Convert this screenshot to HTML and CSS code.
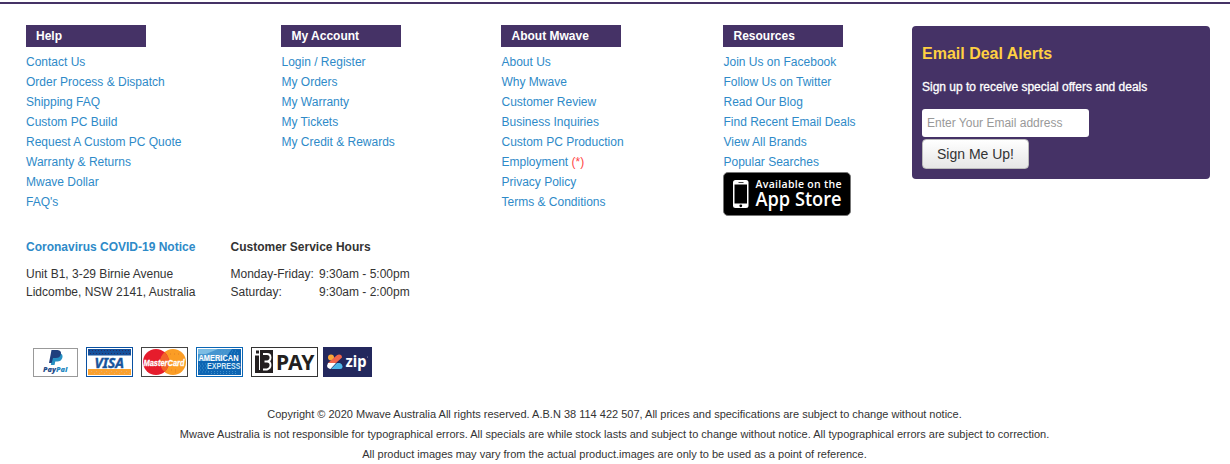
FILE: index.html
```html
<!DOCTYPE html>
<html lang="en">
<head>
<meta charset="utf-8">
<title>Mwave Australia</title>
<link rel="stylesheet" href="styles.css">
</head>
<body>
<footer class="footer">
  <div class="columns">
    <section class="col">
      <h4 class="col-title">Help</h4>
      <ul class="links">
        <li><a>Contact Us</a></li><li><a>Order Process &amp; Dispatch</a></li><li><a>Shipping FAQ</a></li><li><a>Custom PC Build</a></li><li><a>Request A Custom PC Quote</a></li><li><a>Warranty &amp; Returns</a></li><li><a>Mwave Dollar</a></li><li><a>FAQ's</a></li>
      </ul>
    </section>
    <section class="col shifted">
      <h4 class="col-title">My Account</h4>
      <ul class="links">
        <li><a>Login / Register</a></li><li><a>My Orders</a></li><li><a>My Warranty</a></li><li><a>My Tickets</a></li><li><a>My Credit &amp; Rewards</a></li>
      </ul>
    </section>
    <section class="col shifted">
      <h4 class="col-title">About Mwave</h4>
      <ul class="links">
        <li><a>About Us</a></li><li><a>Why Mwave</a></li><li><a>Customer Review</a></li><li><a>Business Inquiries</a></li><li><a>Custom PC Production</a></li><li><a>Employment <span class="flag">(*)</span></a></li><li><a>Privacy Policy</a></li><li><a>Terms &amp; Conditions</a></li>
      </ul>
    </section>
    <section class="col shifted">
      <h4 class="col-title">Resources</h4>
      <ul class="links">
        <li><a>Join Us on Facebook</a></li><li><a>Follow Us on Twitter</a></li><li><a>Read Our Blog</a></li><li><a>Find Recent Email Deals</a></li><li><a>View All Brands</a></li><li><a>Popular Searches</a></li>
      </ul>
      <svg class="appstore" width="128" height="44" viewBox="0 0 128 44">
        <rect x=".5" y=".5" width="127" height="43" rx="4.5" fill="#000" stroke="#777"/>
        <rect x="10" y="8" width="15.5" height="28" rx="2.5" fill="#fff"/>
        <rect x="11.5" y="12.5" width="12.5" height="19" fill="#000"/>
        <rect x="15.5" y="10" width="5" height="1" fill="#444"/>
        <circle cx="17.8" cy="33.8" r="1.4" fill="#000"/>
        <g fill="#fff" font-family="Open Sans, sans-serif">
          <text x="32.500" y="16" font-size="10.500" font-weight="600" textLength="86" lengthAdjust="spacing">Available on the</text>
          <text x="32.500" y="34" font-size="19.500" font-weight="600" textLength="86" lengthAdjust="spacingAndGlyphs">App Store</text>
        </g>
      </svg>
    </section>
    <section class="alerts">
      <h3 class="alerts-title">Email Deal Alerts</h3>
      <p class="alerts-text">Sign up to receive special offers and deals</p>
      <input class="email" type="text" placeholder="Enter Your Email address">
      <button class="signup">Sign Me Up!</button>
    </section>
  </div>
  <div class="contact">
    <div class="address">
      <h5 class="contact-title notice">Coronavirus COVID-19 Notice</h5>
      <p>Unit B1, 3-29 Birnie Avenue<br>Lidcombe, NSW 2141, Australia</p>
    </div>
    <div>
      <h5 class="contact-title">Customer Service Hours</h5>
      <div class="hours"><span>Monday-Friday:</span><span>9:30am - 5:00pm</span><span>Saturday:</span><span>9:30am - 2:00pm</span></div>
    </div>
  </div>
  <div class="payments">
    <svg class="paypal" width="45" height="29" viewBox="0 0 45 29">
      <rect x=".5" y=".5" width="44" height="28" fill="#fff" stroke="#999"/>
      <path d="M20 5h6.500q4 1 2.800 5-1.300 3.500-5 3.500h-2l-.8 3.500h-3.700z" fill="#2790c3"/>
      <path d="M18.500 2h6q4.500.8 3.300 4.500-1 3.500-5 3.500H20l-1.300 5H16z" fill="#1f3f7d"/>
      <g font-family="Open Sans, sans-serif" font-size="7.500" font-weight="800" font-style="italic"><text x="10" y="24" fill="#1f4a88" textLength="13" lengthAdjust="spacingAndGlyphs">Pay</text><text x="23" y="24" fill="#2387c2" textLength="11.500" lengthAdjust="spacingAndGlyphs">Pal</text></g>
    </svg>
    <svg class="visa" width="47" height="30" viewBox="0 0 47 30">
      <rect x=".5" y=".5" width="46" height="29" fill="#fff" stroke="#0a51a1"/>
      <path d="M2 2h43v6.500H2z" fill="#14509c"/><path d="M3 3.500h41M4 6.500h40" stroke="#252e63" stroke-dasharray="1 2"/>
      <path d="M2 22h43v6H2z" fill="#f9a12e"/><path d="M5 24.500h38M8 26.500h36" stroke="#e5ac77" stroke-dasharray="1 4"/>
      <text x="8.500" y="20.500" font-family="Noto Sans, sans-serif" font-size="14.500" font-weight="700" font-style="italic" fill="#17549c" stroke="#17549c" stroke-width=".4" textLength="29.500" lengthAdjust="spacingAndGlyphs">VISA</text>
    </svg>
    <svg class="mastercard" width="47" height="30" viewBox="0 0 47 30">
      <rect x=".5" y=".5" width="46" height="29" fill="#fff" stroke="#444"/>
      <circle cx="32" cy="15" r="13" fill="#fb9d25"/><circle cx="15" cy="15" r="13" fill="#e61c2c"/>
      <path d="M23.500 5.200a13 13 0 0 1 0 19.600 13 13 0 0 1 0-19.600z" fill="#f26329"/>
      <path d="M29 7h9M30 23h8M34 25h4" stroke="#e48225" stroke-dasharray="1 3"/>
      <text x="2.500" y="18.500" font-family="Liberation Sans, sans-serif" font-size="9" font-weight="700" font-style="italic" fill="#fff" stroke="#fff" stroke-width=".3" textLength="41" lengthAdjust="spacingAndGlyphs">MasterCard</text>
    </svg>
    <svg class="amex" width="47" height="30" viewBox="0 0 47 30">
      <rect x=".5" y=".5" width="46" height="29" fill="#fff" stroke="#0b66b4"/>
      <path d="M2 2h43v26H2z" fill="#0d65b3"/><path d="M2 2h34L27 14H2z" fill="#4796d0"/><path d="M2 2h20L10 7H2z" fill="#7cbce3"/>
      <path d="M3 17h8M4 19h7M3 21h7M4 23h7M3 25h11M24 4h18M26 6h17M12 24.500h30M15 26.500h25" stroke="#3f8fca" stroke-dasharray="1 2"/>
      <g font-family="Liberation Sans, sans-serif" font-size="8.500" font-weight="700" fill="#fff"><text x="2.500" y="13.500" textLength="40" lengthAdjust="spacingAndGlyphs">AMERICAN</text><text x="11" y="21.800" fill="#d3e8f6" textLength="33.500" lengthAdjust="spacingAndGlyphs">EXPRESS</text></g>
    </svg>
    <svg class="bpay" width="67" height="30" viewBox="0 0 67 30">
      <rect x=".5" y=".5" width="66" height="29" fill="#fff" stroke="#333"/>
      <path d="M9 3h13v23H9zM4 8.500h4V26H4zM5 3.500h3v3H5zM4 23h6v3H4z" fill="#231f20"/>
      <path d="M12 7h4q3.500 0 3.500 3.500T16 14.500q3.500 0 3.500 3.500T16 22.500h-4M13.500 14.500H16" fill="none" stroke="#fff" stroke-width="1.900"/>
      <text x="25" y="23" font-family="Noto Sans, sans-serif" font-size="21" font-weight="700" fill="#231f20" textLength="38.500" lengthAdjust="spacingAndGlyphs">PAY</text>
    </svg>
    <svg class="zip" width="49" height="30" viewBox="0 0 49 30">
      <path d="M0 0h49v30H0z" fill="#23285d"/>
      <circle cx="8" cy="10.500" r="3" fill="#f9a638"/>
      <path d="M5 16h8l6-5.500q0-3-3-3-2 0-3 1.500z" fill="#f0654b"/>
      <path d="M5 16h8l-5.500 6H7q-3-1-3-3z" fill="#fff"/>
      <path d="M8 22l6-6h3q2.500 1 2.500 3.500T17 22z" fill="#4db6e8"/>
      <text x="22.500" y="19.500" font-family="Noto Sans, sans-serif" font-size="15.500" font-weight="700" fill="#fff" textLength="21" lengthAdjust="spacingAndGlyphs">zip</text><circle cx="44.500" cy="10" r=".5" fill="#b9bbd0"/>
    </svg>
  </div>
  <div class="legal">
    <p>Copyright © 2020 Mwave Australia All rights reserved. A.B.N 38 114 422 507, All prices and specifications are subject to change without notice.</p>
    <p>Mwave Australia is not responsible for typographical errors. All specials are while stock lasts and subject to change without notice. All typographical errors are subject to correction.</p>
    <p>All product images may vary from the actual product.images are only to be used as a point of reference.</p>
  </div>
</footer>
</body>
</html>
```

FILE: styles.css
```css
* { box-sizing: border-box; }
body { margin: 0; background: #fff; font: 12px/18px "Liberation Sans", Arial, sans-serif; color: #333; overflow: hidden; }
h3, h4, h5, p, ul { margin: 0; padding: 0; }
.footer { margin-top: 2px; border-top: 2px solid #453266; padding: 21px 20px 0 26px; height: 462px; }
.columns { display: grid; grid-template-columns: 255px 220px 222px 189px 298px; height: 213px; align-items: start; }
.col-title { width: 120px; height: 22px; padding-left: 10px; background: #453266; color: #fff; font-size: 12px; line-height: 22px; }
.links { list-style: none; padding-top: 5px; line-height: 20px; color: #2e8ac8; white-space: nowrap; }
.shifted .links { padding-left: .5px; }
.shifted .col-title { padding-left: 10.5px; }
.flag { color: #ff4545; }
.appstore { display: block; }
.alerts { margin-top: 1px; height: 153px; padding: 18px 10px 0; border-radius: 4px; background: #453266; color: #fff; }
.alerts-title { color: #ffd042; font-size: 16px; line-height: 20px; }
.alerts-text { margin-top: 14px; -webkit-text-stroke: .3px #fff; }
.email { display: block; width: 167px; height: 28px; margin-top: 13px; padding: 0 5px; border: 0; border-radius: 3px; background: #fff; font: 12px "Liberation Sans", Arial, sans-serif; }
.email::placeholder { color: #999; opacity: 1; }
.signup { display: block; width: 107px; height: 30px; margin-top: 2px; padding: 0; border: 1px solid #bbb; border-radius: 4px; background: linear-gradient(#fff, #e6e6e6); color: #333; font: 14px "Liberation Sans", Arial, sans-serif; }
.contact { display: grid; grid-template-columns: 204.5px auto; height: 109px; }
.contact-title { font-size: 12px; line-height: 18px; margin-bottom: 9px; }
.notice { color: #2e8ac8; }
.hours { display: grid; grid-template-columns: 88.5px auto; }
.payments { display: flex; align-items: flex-end; height: 30px; margin-left: 7px; }
.payments svg { overflow: visible; }
.visa, .mastercard, .amex, .bpay { margin-left: 8px; }
.zip { margin-left: 5px; }
.legal { margin-top: 27px; margin-right: 7px; text-align: center; font-size: 11px; line-height: 20px; white-space: nowrap; }
```
